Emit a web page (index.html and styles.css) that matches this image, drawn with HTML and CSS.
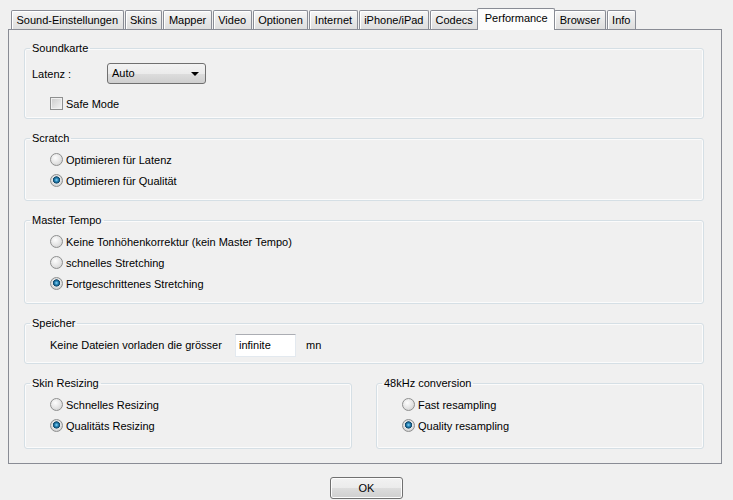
FILE: index.html
```html
<!DOCTYPE html>
<html lang="de">
<head>
  <meta charset="UTF-8">
  <title>Optionen</title>
  <link rel="stylesheet" href="styles.css">
</head>
<body>
  <div class="tabs">
    <div class="tab">Sound-Einstellungen</div>
    <div class="tab">Skins</div>
    <div class="tab">Mapper</div>
    <div class="tab">Video</div>
    <div class="tab">Optionen</div>
    <div class="tab">Internet</div>
    <div class="tab">iPhone/iPad</div>
    <div class="tab">Codecs</div>
    <div class="tab active">Performance</div>
    <div class="tab">Browser</div>
    <div class="tab">Info</div>
  </div>

  <div class="panel">
    <fieldset class="group soundcard">
      <legend>Soundkarte</legend>
      <div class="latency">
        <span class="latency-label">Latenz :</span>
        <div class="combo">Auto<span class="arrow"></span></div>
      </div>
      <div class="row check-row">
        <span class="checkbox"></span>
        <span>Safe Mode</span>
      </div>
    </fieldset>

    <fieldset class="group">
      <legend>Scratch</legend>
      <div class="row"><span class="radio"></span><span>Optimieren für Latenz</span></div>
      <div class="row"><span class="radio on"></span><span>Optimieren für Qualität</span></div>
    </fieldset>

    <fieldset class="group">
      <legend>Master Tempo</legend>
      <div class="row"><span class="radio"></span><span>Keine Tonhöhenkorrektur (kein Master Tempo)</span></div>
      <div class="row"><span class="radio"></span><span>schnelles Stretching</span></div>
      <div class="row"><span class="radio on"></span><span>Fortgeschrittenes Stretching</span></div>
    </fieldset>

    <fieldset class="group memory">
      <legend>Speicher</legend>
      <div class="row">
        <span class="memory-label">Keine Dateien vorladen die grösser</span>
        <div class="textbox">infinite</div>
        <span class="unit">mn</span>
      </div>
    </fieldset>

    <div class="pair">
      <fieldset class="group bottom">
        <legend>Skin Resizing</legend>
        <div class="row"><span class="radio"></span><span>Schnelles Resizing</span></div>
        <div class="row"><span class="radio on"></span><span>Qualitäts Resizing</span></div>
      </fieldset>
      <fieldset class="group bottom">
        <legend>48kHz conversion</legend>
        <div class="row"><span class="radio"></span><span>Fast resampling</span></div>
        <div class="row"><span class="radio on"></span><span>Quality resampling</span></div>
      </fieldset>
    </div>
  </div>

  <div class="footer">
    <button class="ok">OK</button>
  </div>
</body>
</html>
```

FILE: styles.css
```css
* {
  box-sizing: border-box;
}
body {
  margin: 0;
  background: #f0f0f0;
  font-family: "Liberation Sans", Arial, sans-serif;
  font-size: 11px;
  color: #000;
}

/* tab strip */
.tabs {
  display: flex;
  align-items: flex-end;
  height: 21px;
  margin-top: 8px;
  padding-left: 11px;
}
.tab {
  height: 19px;
  line-height: 19px;
  padding: 0 4.5px;
  margin-right: 1px;
  border: 1px solid #898c95;
  border-bottom: none;
  border-radius: 2px 2px 0 0;
  background: linear-gradient(#f6f6f6, #e6e6e6 60%, #dedede);
  box-shadow: inset 1px 1px 0 #fff;
  white-space: nowrap;
}
.tab.active {
  position: relative;
  z-index: 1;
  height: 22px;
  line-height: 19px;
  margin: 0 -1px -1px -2px;
  padding: 0 6.5px;
  background: #fcfcfc;
  box-shadow: none;
}

/* page */
.panel {
  display: flex;
  flex-direction: column;
  gap: 13px;
  width: 714px;
  margin-left: 8px;
  padding: 12px 17px 14px 15px;
  border: 1px solid #898c95;
}

.group {
  margin: 0;
  padding: 4px 0 9px 0;
  border: 1px solid #d5dfe5;
  border-radius: 3px;
  box-shadow: inset 0 0 0 1px #fbfbfb;
}
.group legend {
  margin-left: 5px;
  padding: 0 2px;
  line-height: 13px;
}
.soundcard {
  padding: 4px 0 4px 0;
}
.memory {
  padding-bottom: 7px;
}
.bottom {
  padding-bottom: 12px;
}

.row {
  display: flex;
  align-items: center;
  gap: 3px;
  height: 21px;
  padding-left: 25px;
}

.latency {
  display: flex;
  align-items: center;
  margin-top: 4px;
  padding-left: 7px;
}
.latency-label {
  width: 75px;
}
.combo {
  position: relative;
  width: 99px;
  height: 21px;
  line-height: 19px;
  padding-left: 4px;
  border: 1px solid #707070;
  border-radius: 3px;
  background: linear-gradient(#f3f3f3, #ebebeb 50%, #dddddd 51%, #cfcfcf);
}
.arrow {
  position: absolute;
  right: 6px;
  top: 8px;
  border-left: 4px solid transparent;
  border-right: 4px solid transparent;
  border-top: 4px solid #000;
}

.check-row {
  margin-top: 9px;
}
.checkbox {
  width: 13px;
  height: 13px;
  border: 1px solid #8e8f8f;
  background: linear-gradient(135deg, #cbcbcb, #f4f4f4);
  box-shadow: inset 0 0 0 1px #f0f0f0;
}

.radio {
  width: 13px;
  height: 13px;
  flex: none;
  border: 1px solid #8e8f8f;
  border-radius: 50%;
  background: radial-gradient(circle at 40% 35%, #fdfdfd, #e3e3e3 55%, #c9c9c9);
}
.radio.on {
  background: radial-gradient(circle at 50% 45%, #8fd6f7 0, #2b8bbd 1.6px, #0d4366 3.3px, #e6e6e6 3.9px, #d0d0d0 6px);
}

.memory .row {
  height: 22px;
  gap: 0;
}
.memory-label {
  width: 185px;
}
.textbox {
  width: 61px;
  height: 23px;
  line-height: 21px;
  padding-left: 3px;
  background: #fff;
  border: 1px solid #e3e9ef;
  border-top-color: #abadb3;
}
.unit {
  margin-left: 10px;
}

.pair {
  display: flex;
  gap: 24px;
}
.pair .group {
  flex: 1;
}

/* buttons */
.footer {
  display: flex;
  justify-content: center;
  margin-top: 13px;
}
.ok {
  width: 73px;
  height: 22px;
  padding: 0;
  font: inherit;
  color: #000;
  border: 1px solid #707070;
  border-radius: 3px;
  background: linear-gradient(#f2f2f2, #ebebeb 50%, #dddddd 51%, #cfcfcf);
  box-shadow: inset 0 0 0 1px #fcfcfc;
}
```
